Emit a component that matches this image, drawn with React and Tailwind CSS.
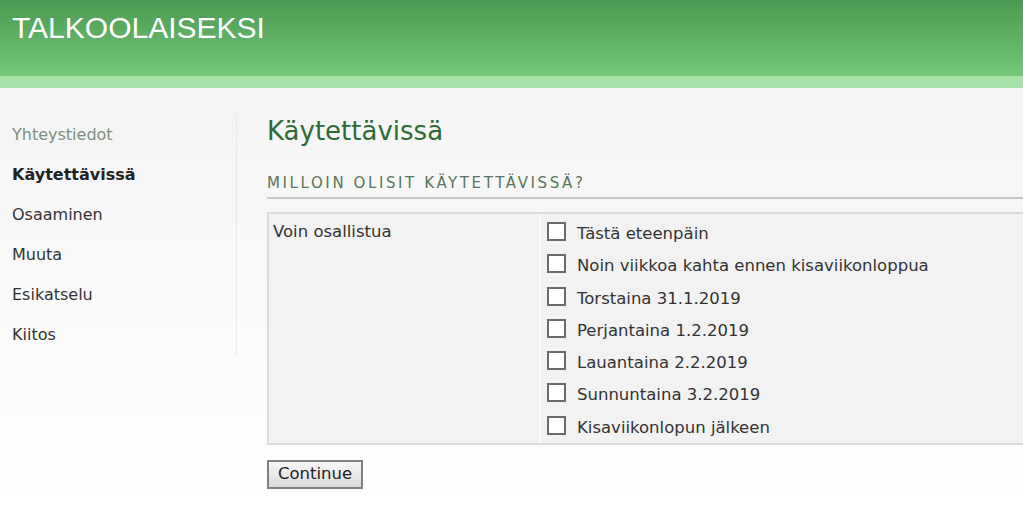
import { useState } from 'react';

const options = [
  'Tästä eteenpäin',
  'Noin viikkoa kahta ennen kisaviikonloppua',
  'Torstaina 31.1.2019',
  'Perjantaina 1.2.2019',
  'Lauantaina 2.2.2019',
  'Sunnuntaina 3.2.2019',
  'Kisaviikonlopun jälkeen',
];

const navItems = ['Yhteystiedot', 'Käytettävissä', 'Osaaminen', 'Muuta', 'Esikatselu', 'Kiitos'];

function App() {
  const [checked, setChecked] = useState({});

  const toggle = (i) => setChecked((c) => ({ ...c, [i]: !c[i] }));

  return (
    <div className="min-h-screen overflow-hidden bg-gradient-to-b from-[#f2f2f2] to-white font-['DejaVu_Sans',Verdana,sans-serif]">
      <header className="h-[76px] bg-gradient-to-b from-[#4b9a51] to-[#73c879] px-3 pt-[9px]">
        <h1 className="font-['Liberation_Sans',Arial,sans-serif] text-[30px] leading-[38px] text-white">
          TALKOOLAISEKSI
        </h1>
      </header>
      <div className="h-[12px] bg-[#a9e1ab]" />

      <div className="flex items-start">
        <nav className="mt-[26px] w-[237px] shrink-0 border-r border-dotted border-[#dcdcdc] pb-[1px]">
          <ul className="flex flex-col">
            {navItems.map((item, i) => (
              <li
                key={item}
                className={`h-[40px] pl-3 pt-[11px] text-[16px] leading-[20px] ${
                  i === 0 ? 'text-[#7d8f7d]' : i === 1 ? 'font-bold text-[#222]' : 'text-[#333]'
                }`}
              >
                {item}
              </li>
            ))}
          </ul>
        </nav>

        <main className="min-w-0 flex-1 pl-[30px] pt-[27px]">
          <h2 className="text-[26px] leading-[32px] text-[#2f6b35]">Käytettävissä</h2>
          <h3 className="mt-[26px] border-b-2 border-[#c8c8c8] pb-[4px] text-[15px] leading-[20px] tracking-[2.6px] text-[#58765a]">
            MILLOIN OLISIT KÄYTETTÄVISSÄ?
          </h3>

          <div className="mt-[13px] -mr-4 flex border-2 border-r-0 border-[#dcdcdc] bg-[#f2f2f2]">
            <div className="w-[272px] shrink-0 border-r-2 border-[#fafafa] pl-[4px] pt-[8px] text-[16.5px] leading-[20px] text-[#333]">
              Voin osallistua
            </div>
            <div className="flex flex-col pl-[6px] pt-[6px]">
              {options.map((opt, i) => (
                <label key={opt} className="flex h-[32.3px] cursor-pointer items-start gap-[11px] last:h-[29px]">
                  <input type="checkbox" className="hidden" checked={!!checked[i]} onChange={() => toggle(i)} />
                  <span className="mt-[2px] flex h-[19px] w-[19px] items-center justify-center border-2 border-[#6b6b6b] bg-white text-[13px] leading-none text-[#333]">
                    {checked[i] ? '✓' : ''}
                  </span>
                  <span className="pt-[4px] text-[16.5px] leading-[20px] text-[#333]">{opt}</span>
                </label>
              ))}
            </div>
          </div>

          <button className="mt-[15px] h-[29px] w-[96px] border-2 border-[#808080] bg-gradient-to-b from-[#f6f6f6] to-[#dcdcdc] text-[16.5px] text-[#222]">
            Continue
          </button>
        </main>
      </div>
    </div>
  );
}

export default App;
